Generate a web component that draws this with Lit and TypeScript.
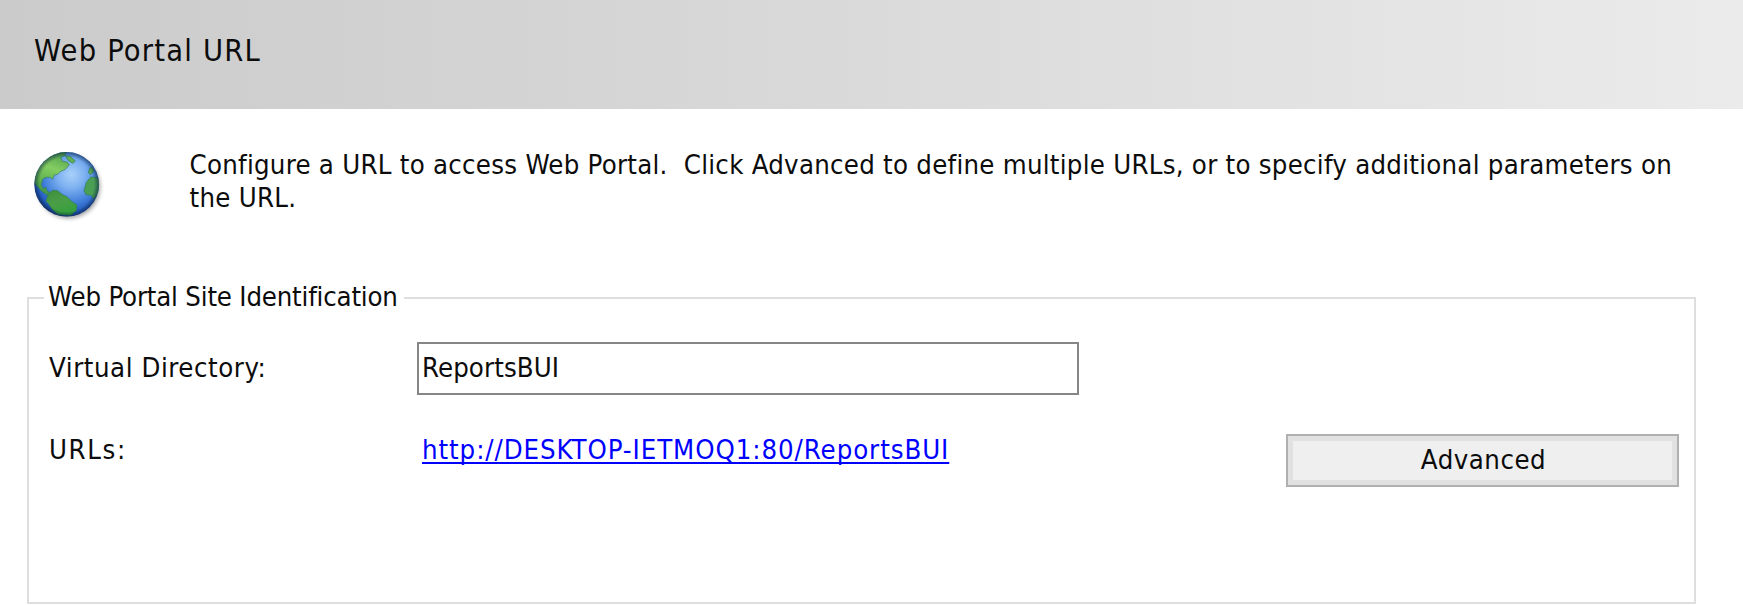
import { LitElement, html, css } from "lit";
import { customElement } from "lit/decorators.js";

@customElement("portal-globe")
class PortalGlobe extends LitElement {
  static styles = css`
    :host { display: block; width: 76px; height: 76px; }
    svg { display: block; }
  `;
  render() {
    return html`<svg width="76" height="76" viewBox="0 0 76 76" aria-hidden="true">
      <defs>
        <radialGradient id="sea" cx="0.57" cy="0.35" r="0.68">
          <stop offset="0" stop-color="#a9d0fa" />
          <stop offset="0.3" stop-color="#7fb2f1" />
          <stop offset="0.62" stop-color="#4482dc" />
          <stop offset="0.88" stop-color="#1f56bd" />
          <stop offset="1" stop-color="#173f8a" />
        </radialGradient>
        <linearGradient id="north" x1="0.7" y1="0" x2="0.4" y2="1">
          <stop offset="0" stop-color="#4f9f4c" />
          <stop offset="0.4" stop-color="#84cd62" />
          <stop offset="0.75" stop-color="#5fb04e" />
          <stop offset="1" stop-color="#41924a" />
        </linearGradient>
        <linearGradient id="south" x1="0" y1="0" x2="0.5" y2="1">
          <stop offset="0" stop-color="#3f8d3c" />
          <stop offset="0.55" stop-color="#4a9e46" />
          <stop offset="1" stop-color="#35a03c" />
        </linearGradient>
        <radialGradient id="rim">
          <stop offset="0.84" stop-color="#0a2340" stop-opacity="0" />
          <stop offset="1" stop-color="#0a2340" stop-opacity="0.6" />
        </radialGradient>
        <filter id="soft" x="-20%" y="-20%" width="140%" height="140%"><feGaussianBlur stdDeviation="2" /></filter>
        <filter id="edge"><feGaussianBlur stdDeviation="1.6" /></filter>
        <filter id="outline"><feGaussianBlur stdDeviation="0.5" /></filter>
        <clipPath id="disc"><circle cx="36.7" cy="35.3" r="32.3" /></clipPath>
      </defs>
      <circle cx="38.7" cy="38" r="31.5" fill="#000" opacity="0.36" filter="url(#soft)" />
      <g filter="url(#outline)">
        <circle cx="36.7" cy="35.3" r="32.3" fill="url(#sea)" />
        <g clip-path="url(#disc)">
          <g transform="translate(-10 -9) scale(0.3333)" stroke="#2f7a5a" stroke-width="2" stroke-linejoin="round" filter="url(#edge)">
            <path fill="url(#north)" d="M40 125L52 85L75 58L105 38L138 34L134 47L122 52L128 64L142 66L148 75L136 88L120 95L113 103L103 105L98 118L91 112L78 112L68 118L64 134L70 146L78 142L82 154L94 158L80 165L64 153L48 135Z" />
            <path fill="url(#south)" d="M84 164L98 150L113 152L126 163L142 171L156 185L171 195L169 212L152 226L115 224L96 208L86 192L78 184Z" />
            <path fill="#5fae50" d="M136 47L152 50L166 63L158 70L144 61Z" />
            <path fill="#55a456" d="M209 84L216 82L222 93L212 104L205 98Z" />
            <path fill="#4c9f55" d="M192 152L199 127L212 111L230 112L240 125L234 158L222 178L213 166L198 164Z" />
          </g>
        </g>
        <circle cx="36.7" cy="35.3" r="32.3" fill="url(#rim)" />
      </g>
    </svg>`;
  }
}

@customElement("app-root")
class AppRoot extends LitElement {
  static styles = css`
    :host {
      display: block; height: 605px; overflow: hidden; background: #fff; color: #0c0c0c;
      font: 27.3px/32.5px "DejaVu Sans Condensed", "DejaVu Sans", sans-serif;
      font-stretch: condensed; white-space: nowrap;
    }
    * { box-sizing: border-box; }
    .header {
      height: 109px; padding: 33px 0 0 34px; font-size: 30.5px; line-height: 36px;
      background: linear-gradient(90deg, #cbcbcb, #d5d5d5 35%, #ebebeb);
      letter-spacing: 1.2px;
    }
    .intro { display: flex; height: 188px; padding: 40px 0 0 30px; }
    .intro p { margin: 0 0 0 83.5px; white-space: pre; letter-spacing: 0.26px; }
    .group {
      display: grid; margin: 0 0 0 27px; width: 1669px; height: 307px;
      grid-template-columns: 388px 869px 1fr; grid-template-rows: 45px 92px 1fr;
      border: 2px solid #dedede; border-top: 0;
    }
    .legend { grid-column: 1 / -1; display: flex; margin: 0 -2px; }
    .legend::before, .legend::after { content: ""; height: 2px; background: #dedede; }
    .legend::before { width: 17px; }
    .legend::after { flex: 1; }
    .legend span { width: 360px; padding-left: 4px; margin-top: -16px; letter-spacing: -0.19px; }
    .label { padding-left: 20px; letter-spacing: 0.56px; }
    .label.urls { letter-spacing: 1.6px; }
    .field {
      width: 662px; height: 53px; border: 2px solid #868686; padding: 8px 0 0 3px;
      letter-spacing: 0.1px;
    }
    .row1 { padding-top: 10px; }
    .row2 { padding-top: 0; }
    .url { padding-left: 5px; letter-spacing: 0.93px; }
    a {
      color: #0000ff; text-decoration: underline; text-decoration-thickness: 2px;
      text-underline-offset: 3px; text-decoration-skip-ink: none;
    }
    button {
      display: block; width: 393px; height: 53px; margin: 0; padding: 0; border: 2px solid #b0b0b0;
      background: #efefef; box-shadow: inset 0 0 0 5px #e1e1e1; color: inherit; font: inherit;
      letter-spacing: 0.5px; text-indent: 2px;
    }
  `;
  render() {
    return html`
      <div class="header">Web Portal URL</div>
      <div class="intro">
        <portal-globe></portal-globe>
        <p>Configure a URL to access Web Portal.  Click Advanced to define multiple URLs, or to specify additional parameters on<br />the URL.</p>
      </div>
      <div class="group">
        <div class="legend"><span>Web Portal Site Identification</span></div>
        <div class="label row1">Virtual Directory:</div>
        <div class="field">ReportsBUI</div>
        <div></div>
        <div class="label urls row2">URLs:</div>
        <div class="url row2"><a>http://DESKTOP-IETMOQ1:80/ReportsBUI</a></div>
        <div><button>Advanced</button></div>
      </div>
    `;
  }
}
